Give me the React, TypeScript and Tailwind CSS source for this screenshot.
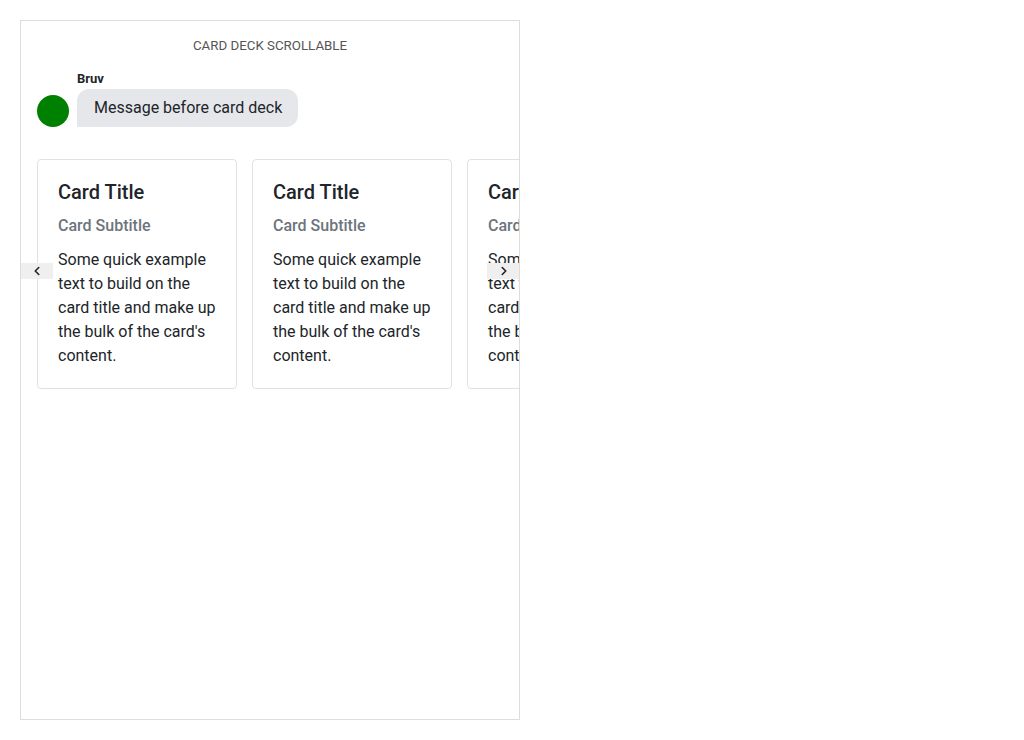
import React from 'react';
import { ChevronLeft, ChevronRight } from 'lucide-react';

const cards = [1, 2, 3, 4];

export default function App() {
  return (
    <div className="min-h-screen bg-white p-5 font-['Roboto','Liberation_Sans',sans-serif] text-[#212529]">
      <div className="w-[500px] h-[700px] border border-[#dddddd] overflow-hidden">
        {/* Header */}
        <div className="pt-[17px] text-center text-[13.3px] leading-4 text-[#555555] uppercase">
          Card Deck Scrollable
        </div>

        {/* Message */}
        <div className="flex items-end gap-2 pl-4 mt-4">
          <div className="w-8 h-8 rounded-full bg-[#008000] flex-shrink-0" />
          <div>
            <div className="text-[13px] leading-[18px] font-bold mb-[1px]">Bruv</div>
            <div className="bg-[#e5e7eb] rounded-xl rounded-bl-none pl-[17px] pr-4 py-[7px] text-[16px] leading-6">
              Message before card deck
            </div>
          </div>
        </div>

        {/* Card deck */}
        <div className="relative mt-8">
          <div className="flex gap-[15px] pl-4 overflow-hidden">
            {cards.map((c) => (
              <div
                key={c}
                className="w-[200px] flex-shrink-0 border border-[#dee2e6] rounded p-5"
              >
                <div className="text-[20px] leading-6 font-medium mb-3">Card Title</div>
                <div className="text-[16px] leading-[19px] font-medium text-[#6c757d] mb-[13px]">Card Subtitle</div>
                <p className="text-[16px] leading-6">
                  Some quick example text to build on the card title and make up the bulk of the card's content.
                </p>
              </div>
            ))}
          </div>
          <button className="absolute left-0 top-[104px] w-8 h-4 bg-[#efefef] flex items-center justify-center">
            <ChevronLeft className="w-[14px] h-[14px]" strokeWidth={2.75} />
          </button>
          <button className="absolute right-0 top-[104px] w-8 h-4 bg-[#efefef] flex items-center justify-center pl-[2px]">
            <ChevronRight className="w-[14px] h-[14px]" strokeWidth={2.75} />
          </button>
        </div>
      </div>
    </div>
  );
}
